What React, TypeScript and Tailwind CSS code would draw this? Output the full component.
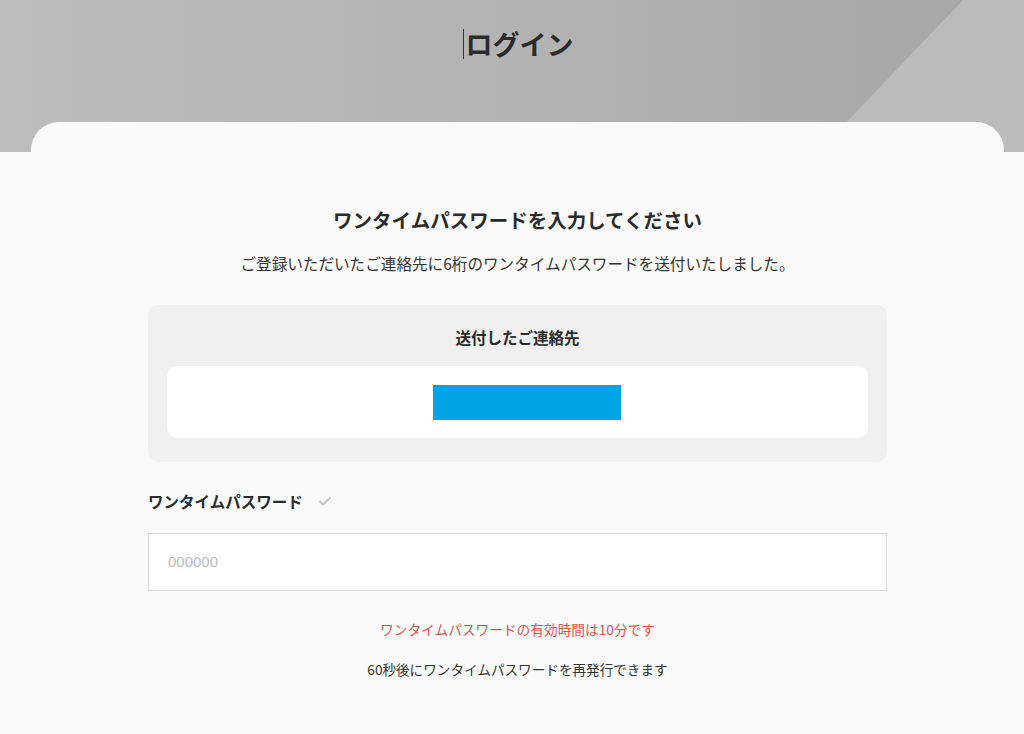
import React from "react";

export default function App() {
  return (
    <div
      className="min-h-[734px] w-full bg-[#f9f9f9] text-[#333]"
      style={{ fontFamily: '"Noto Sans CJK JP", "Noto Sans", sans-serif' }}
    >
      <header className="relative h-[152px] overflow-hidden bg-[linear-gradient(90deg,#bdbdbd_0%,#b3b3b3_50%,#a6a6a6_100%)]">
        <div className="absolute inset-0 bg-[#bcbcbc] [clip-path:polygon(963px_0,1024px_0,1024px_152px,818px_152px)]" />
        <div className="relative flex justify-center pt-[25px] pl-[12px]">
          <h1 className="flex items-center text-[27px] font-bold leading-[38px] text-[#2b2b2b]">
            <span className="mr-[2px] inline-block h-[30px] w-[1px] bg-[#333]" />
            ログイン
          </h1>
        </div>
      </header>
      <main className="relative -mt-[30px] ml-[31px] mr-[20px] rounded-t-[28px] bg-[#fafafa] pb-[40px]">
        <div className="flex flex-col items-center pt-[83px]">
          <h2 className="text-[19.5px] font-bold leading-[30px] text-[#2b2b2b]">
            ワンタイムパスワードを入力してください
          </h2>
          <p className="mt-[17px] text-[15.6px] leading-[22px] text-[#333]">
            ご登録いただいたご連絡先に6桁のワンタイムパスワードを送付いたしました。
          </p>
        </div>
        <div className="mx-auto mt-[31px] w-[739px]">
          <div className="rounded-[10px] bg-[#f0f0f0] px-[19px] pt-[20px] pb-[24px]">
            <p className="text-center text-[15.5px] font-bold leading-[24px] text-[#2b2b2b]">
              送付したご連絡先
            </p>
            <div className="mt-[17px] flex h-[72px] items-center justify-center rounded-[10px] bg-white">
              <div className="ml-[19px] h-[35px] w-[188px] bg-[#00a4e4]" />
            </div>
          </div>
          <div className="mt-[27px] flex items-center gap-[15px]">
            <span className="text-[15.5px] font-bold leading-[24px] text-[#2b2b2b]">
              ワンタイムパスワード
            </span>
            <svg width="14" height="10" viewBox="0 0 14 10" fill="none">
              <path d="M1.5 5 L5 8.5 L12.5 1.5" stroke="#c4c4c4" strokeWidth="2" />
            </svg>
          </div>
          <div className="mt-[20px] flex h-[58px] items-center border border-[#dcdcdc] bg-white px-[19px]">
            <span
              className="text-[15px] text-[#bdbdbd]"
              style={{ fontFamily: '"Liberation Sans", "Noto Sans CJK JP", sans-serif' }}
            >
              000000
            </span>
          </div>
          <p className="mt-[27px] text-center text-[13.7px] leading-[22px] text-[#d9534f]">
            ワンタイムパスワードの有効時間は10分です
          </p>
          <p className="mt-[18px] text-center text-[13.6px] leading-[22px] text-[#333]">
            60秒後にワンタイムパスワードを再発行できます
          </p>
        </div>
      </main>
    </div>
  );
}
